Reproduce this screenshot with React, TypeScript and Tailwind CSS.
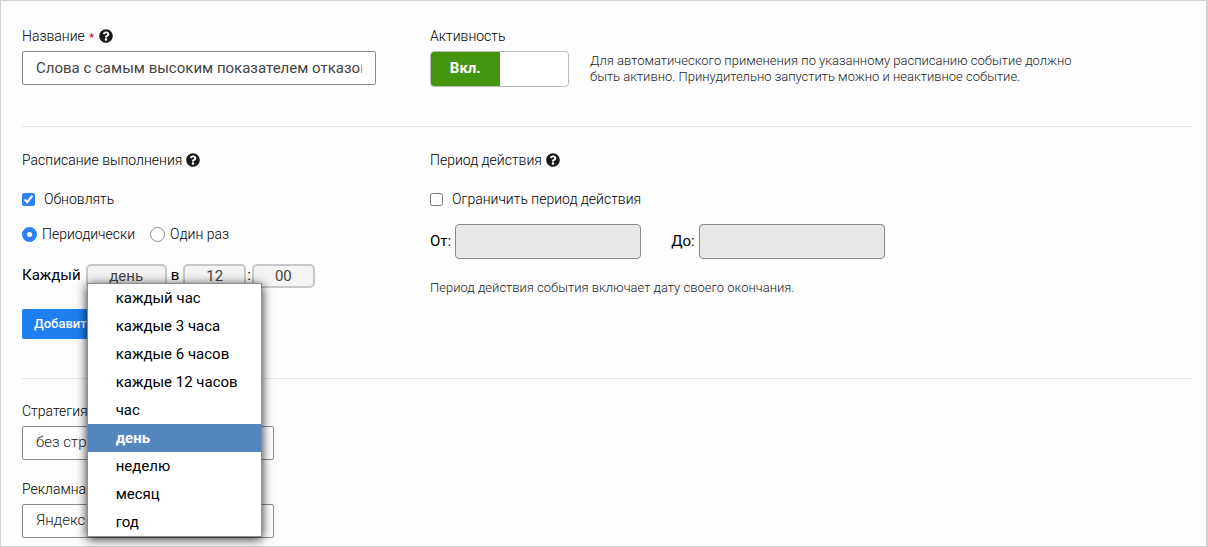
import React, { useState } from 'react';
import { FaQuestionCircle } from 'react-icons/fa';

const periods = [
    'каждый час',
    'каждые 3 часа',
    'каждые 6 часов',
    'каждые 12 часов',
    'час',
    'день',
    'неделю',
    'месяц',
    'год',
];

const smallSelect =
    'h-6 appearance-none rounded-[5px] border-2 border-[#c8c8c8] bg-[#f4f4f4] text-center text-[15px] leading-5 text-[#444] [text-align-last:center]';

function Help({ label }: { label: string }) {
    return (
        <button type="button" aria-label={label} className="ml-1 text-[#1a1a1a]">
            <FaQuestionCircle className="size-3.5" />
        </button>
    );
}

function SelectField({ id, label, value }: { id: string; label: string; value: string }) {
    return (
        <div className="flex flex-col">
            <label htmlFor={id} className="mb-[5px] h-5 leading-5">{label}</label>
            <select
                id={id}
                className="h-[34px] w-[252px] appearance-none rounded-xs border border-[#8a8a8a] bg-white px-[13px] text-[15px] text-[#222]"
            >
                <option>{value}</option>
            </select>
        </div>
    );
}

export default function App() {
    const [active, setActive] = useState(true);
    const [menuOpen, setMenuOpen] = useState(true);
    const [period, setPeriod] = useState('день');
    const [limited, setLimited] = useState(false);

    return (
        <form className="min-h-screen border border-r-2 border-[#d2d2d2] bg-[#fdfdfd] pt-[25px] pr-3.5 pb-2 pl-[21px] font-['Roboto',sans-serif] text-sm font-light text-black">
            {/* Name and activity */}
            <section className="grid grid-cols-[408px_1fr] pb-[39px]">
                <div>
                    <div className="mb-[5px] flex h-5 items-center">
                        <label htmlFor="name">
                            Название <span className="mx-px text-[10px] font-bold text-[#d0021b]">*</span>
                        </label>
                        <Help label="Справка: название" />
                    </div>
                    <input
                        id="name"
                        type="text"
                        defaultValue="Слова с самым высоким показателем отказов"
                        className="h-[34px] w-[354px] rounded-xs border border-[#8a8a8a] bg-white px-[13px] text-[15px] font-normal text-[#444]"
                    />
                </div>
                <div>
                    <div id="active-label" className="mb-[5px] h-5 leading-5">Активность</div>
                    <div className="flex items-center">
                        <button
                            type="button"
                            role="switch"
                            aria-checked={active}
                            aria-labelledby="active-label"
                            onClick={() => setActive(!active)}
                            className="flex h-9 w-[139px] shrink-0 overflow-hidden rounded-sm border border-[#bdbdbd] bg-white"
                        >
                            {active ? (
                                <span className="flex h-full w-1/2 items-center justify-center bg-[#45960e] text-[15px] font-bold text-white">
                                    Вкл.
                                </span>
                            ) : (
                                <span className="ml-auto flex h-full w-1/2 items-center justify-center bg-[#ccc] text-[15px] font-bold text-white">
                                    Выкл.
                                </span>
                            )}
                        </button>
                        <p className="ml-[21px] max-w-[500px] text-[13px] leading-4 text-[#222]">
                            Для автоматического применения по указанному расписанию событие должно быть активно.
                            Принудительно запустить можно и неактивное событие.
                        </p>
                    </div>
                </div>
            </section>

            {/* Schedule and period */}
            <section className="grid grid-cols-[408px_1fr] border-t border-[#e6e6e6] pt-[23px] pb-[39px]">
                <div>
                    <div className="flex h-5 items-center">
                        Расписание выполнения
                        <Help label="Справка: расписание выполнения" />
                    </div>
                    <label className="mt-[19px] flex h-5 items-center">
                        <input type="checkbox" defaultChecked className="mr-[9px] size-[13px] accent-[#2f80f7]" />
                        Обновлять
                    </label>
                    <div className="mt-[15px] flex h-5 items-center gap-[15px]">
                        <label className="flex items-center gap-[5px]">
                            <input
                                type="radio"
                                name="mode"
                                defaultChecked
                                className="size-[15px] appearance-none rounded-full border border-[#8e8e8e] bg-white checked:border-[5px] checked:border-[#2f80f7]"
                            />
                            Периодически
                        </label>
                        <label className="flex items-center gap-[5px]">
                            <input
                                type="radio"
                                name="mode"
                                className="size-[15px] appearance-none rounded-full border border-[#8e8e8e] bg-white checked:border-[5px] checked:border-[#2f80f7]"
                            />
                            Один раз
                        </label>
                    </div>

                    <div className="mt-5 flex h-6 items-center text-[15px] font-normal">
                        <span id="every-label" className="mr-[5px]">Каждый</span>
                        <div className="relative">
                            <button
                                type="button"
                                aria-haspopup="listbox"
                                aria-expanded={menuOpen}
                                aria-labelledby="every-label"
                                onClick={() => setMenuOpen(!menuOpen)}
                                className={`block w-[81px] ${smallSelect}`}
                            >
                                {period}
                            </button>
                            {menuOpen && (
                                <ul
                                    role="listbox"
                                    aria-labelledby="every-label"
                                    className="absolute top-[19px] left-px z-10 w-[175px] border border-[#8c8c8c] bg-white text-black shadow-[0_2px_10px_rgba(0,0,0,0.85)]"
                                >
                                    {periods.map((item) => (
                                        <li
                                            key={item}
                                            role="option"
                                            aria-selected={item === period}
                                            onClick={() => {
                                                setPeriod(item);
                                                setMenuOpen(false);
                                            }}
                                            className={`h-7 cursor-default pl-7 leading-7 ${item === period ? 'bg-[#5585bf] font-bold text-white' : ''}`}
                                        >
                                            {item}
                                        </li>
                                    ))}
                                </ul>
                            )}
                        </div>
                        <span className="mx-1">в</span>
                        <select aria-label="Часы" className={`w-[63px] ${smallSelect}`}>
                            <option>12</option>
                        </select>
                        <span className="mx-px">:</span>
                        <select aria-label="Минуты" className={`w-[63px] ${smallSelect}`}>
                            <option>00</option>
                        </select>
                    </div>

                    <button
                        type="button"
                        className="mt-[21px] h-[30px] rounded-xs bg-[#1f7ff0] px-3 text-[13px] font-medium text-white"
                    >
                        Добавить
                    </button>
                </div>

                <div>
                    <div className="flex h-5 items-center">
                        Период действия
                        <Help label="Справка: период действия" />
                    </div>
                    <label className="mt-[19px] flex h-5 items-center">
                        <input
                            type="checkbox"
                            checked={limited}
                            onChange={(e) => setLimited(e.target.checked)}
                            className="mr-[9px] size-[13px] accent-[#2f80f7]"
                        />
                        Ограничить период действия
                    </label>
                    <div className="mt-[15px] flex gap-[30px] text-[15px] font-normal">
                        <label className="flex items-center gap-1">
                            От:
                            <input
                                type="text"
                                disabled={!limited}
                                className="h-[35px] w-[186px] rounded-sm border border-[#8a8a8a] bg-white px-3 disabled:bg-[#e8e8e8]"
                            />
                        </label>
                        <label className="flex items-center gap-1">
                            До:
                            <input
                                type="text"
                                disabled={!limited}
                                className="h-[35px] w-[186px] rounded-sm border border-[#8a8a8a] bg-white px-3 disabled:bg-[#e8e8e8]"
                            />
                        </label>
                    </div>
                    <p className="mt-[21px] text-[13px] leading-4 text-[#222]">
                        Период действия события включает дату своего окончания.
                    </p>
                </div>
            </section>

            {/* Strategy and ad system */}
            <section className="flex flex-col gap-[19px] border-t border-[#e6e6e6] pt-[22px]">
                <SelectField id="strategy" label="Стратегия" value="без стратегии" />
                <SelectField id="system" label="Рекламная" value="Яндекс Директ" />
            </section>
        </form>
    );
}
